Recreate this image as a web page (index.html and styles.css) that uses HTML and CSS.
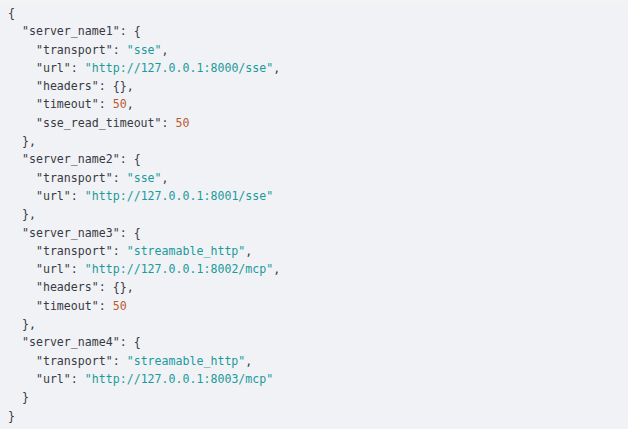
FILE: index.html
```html
<!DOCTYPE html>
<html>
<head>
<meta charset="utf-8">
<link rel="stylesheet" href="styles.css">
</head>
<body>
<div class="topband"></div>
<pre class="code"><span class="p">{</span>
  <span class="k">"server_name1"</span>: {
    <span class="k">"transport"</span>: <span class="s">"sse"</span>,
    <span class="k">"url"</span>: <span class="s">"http://127.0.0.1:8000/sse"</span>,
    <span class="k">"headers"</span>: {},
    <span class="k">"timeout"</span>: <span class="n">50</span>,
    <span class="k">"sse_read_timeout"</span>: <span class="n">50</span>
  },
  <span class="k">"server_name2"</span>: {
    <span class="k">"transport"</span>: <span class="s">"sse"</span>,
    <span class="k">"url"</span>: <span class="s">"http://127.0.0.1:8001/sse"</span>
  },
  <span class="k">"server_name3"</span>: {
    <span class="k">"transport"</span>: <span class="s">"streamable_http"</span>,
    <span class="k">"url"</span>: <span class="s">"http://127.0.0.1:8002/mcp"</span>,
    <span class="k">"headers"</span>: {},
    <span class="k">"timeout"</span>: <span class="n">50</span>
  },
  <span class="k">"server_name4"</span>: {
    <span class="k">"transport"</span>: <span class="s">"streamable_http"</span>,
    <span class="k">"url"</span>: <span class="s">"http://127.0.0.1:8003/mcp"</span>
  }
}</pre>
</body>
</html>
```
FILE: styles.css
```css
html, body {
  margin: 0;
  padding: 0;
  background: #f1f2f6;
  height: 100%;
}
.topband {
  height: 4px;
  background: #f3f3f3;
}
.code {
  margin: 0;
  padding: 0 8px;
  font-family: "DejaVu Sans Mono", "Liberation Mono", monospace;
  font-size: 11.6px;
  line-height: 18.3px;
  color: #383a42;
}
.k { color: #383a42; }
.s { color: #1a9a9a; }
.n { color: #b85a30; }
```
